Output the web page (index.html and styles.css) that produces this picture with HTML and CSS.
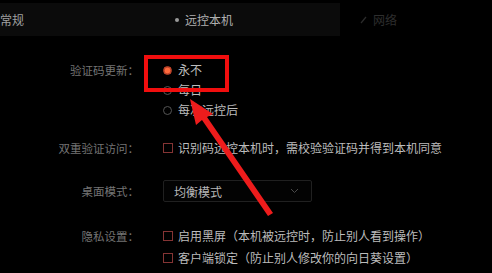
FILE: index.html
```html
<!DOCTYPE html>
<html lang="zh">
<head>
<meta charset="utf-8">
<link rel="stylesheet" href="styles.css">
</head>
<body>
<div class="page">
  <div class="tabs">
    <div class="tabs-main">
      <div class="tab tab-general">常规</div>
      <div class="tab tab-remote">
        <svg class="tab-icon" width="6" height="6" viewBox="0 0 6 6"><circle cx="3" cy="3" r="2" fill="#9a9a9a"/></svg>
        <span>远控本机</span>
      </div>
    </div>
    <div class="tab tab-net">
      <svg class="tab-icon" width="8" height="8" viewBox="0 0 8 8"><path d="M1 7 L6 1" stroke="#2c2c2c" stroke-width="1.2"/></svg>
      <span>网络</span>
    </div>
  </div>

  <div class="form">
    <div class="row row-verify">
      <div class="label">验证码更新：</div>
      <div class="field radios">
        <div class="radio-item"><span class="radio checked"></span><span class="opt">永不</span></div>
        <div class="radio-item"><span class="radio"></span><span class="opt">每日</span></div>
        <div class="radio-item"><span class="radio"></span><span class="opt">每次远控后</span></div>
      </div>
    </div>
    <div class="row row-double">
      <div class="label">双重验证访问：</div>
      <div class="field">
        <div class="check-item"><span class="check"></span><span class="opt">识别码远控本机时，需校验验证码并得到本机同意</span></div>
      </div>
    </div>
    <div class="row row-desktop">
      <div class="label">桌面模式：</div>
      <div class="field">
        <div class="select">
          <span class="select-text">均衡模式</span>
          <svg class="chev" width="9" height="6" viewBox="0 0 9 6"><path d="M1 1 L4.5 4.5 L8 1" fill="none" stroke="#4a4a4a" stroke-width="1"/></svg>
        </div>
      </div>
    </div>
    <div class="row row-privacy">
      <div class="label">隐私设置：</div>
      <div class="field checks">
        <div class="check-item"><span class="check"></span><span class="opt">启用黑屏（本机被远控时，防止别人看到操作）</span></div>
        <div class="check-item"><span class="check"></span><span class="opt">客户端锁定（防止别人修改你的向日葵设置）</span></div>
      </div>
    </div>
  </div>

  <div class="highlight"></div>
  <svg class="arrow" width="492" height="273" viewBox="0 0 492 273">
    <polygon points="190,96 213,111 207,114 273,210 268,213 202,117 196,122" fill="#ee1c1c"/>
  </svg>
</div>
</body>
</html>
```

FILE: styles.css
```css
html, body {
  margin: 0;
  padding: 0;
  background: #000;
}
body {
  width: 492px;
  height: 273px;
  overflow: hidden;
  font-family: "Noto Sans CJK SC", "Noto Sans", sans-serif;
  font-size: 12px;
  color: #b8b8b8;
}
.page {
  position: relative;
  width: 492px;
  height: 273px;
}
.tabs {
  display: flex;
  margin-top: 3px;
  height: 33px;
}
.tabs-main {
  display: flex;
  width: 340px;
  background: #0b0b0b;
  align-items: center;
}
.tab {
  display: flex;
  align-items: center;
  line-height: 16px;
}
.tab-general {
  width: 174px;
  color: #a0a0a0;
}
.tab-remote {
  color: #b0b0b0;
  gap: 5px;
}
.tab-net {
  padding-left: 20px;
  gap: 5px;
  color: #2e2e2e;
}
.tab-icon {
  display: block;
}
.form {
  margin-top: 24px;
  display: flex;
  flex-direction: column;
}
.row {
  display: grid;
  grid-template-columns: 139px 1fr;
  column-gap: 21px;
  align-items: start;
}
.label {
  text-align: right;
  color: #747474;
  font-size: 11.5px;
  line-height: 20px;
}
.radios, .checks {
  display: flex;
  flex-direction: column;
}
.radio-item, .check-item {
  display: flex;
  align-items: center;
  height: 20px;
}
.radio {
  width: 9px;
  height: 9px;
  box-sizing: border-box;
  border-radius: 50%;
  border: 1px solid #555;
  margin-left: 3px;
  margin-right: 6px;
}
.radio.checked {
  border: 1px solid #c6452a;
  background: radial-gradient(circle, #ff6a3c 0 2.6px, #b8432a 3.2px);
}
.opt {
  color: #bcbcbc;
  line-height: 20px;
}
.check {
  width: 10px;
  height: 10px;
  box-sizing: border-box;
  border: 1px solid #853434;
  margin-left: 3px;
  margin-right: 5px;
}
.row-double {
  margin-top: 18px;
}
.row-desktop {
  margin-top: 22px;
}
.row-desktop .label {
  line-height: 22px;
}
.select {
  width: 149px;
  height: 22px;
  margin-left: 3px;
  box-sizing: border-box;
  border: 1px solid #202020;
  border-radius: 2px;
  display: flex;
  align-items: center;
  justify-content: space-between;
  padding: 0 12px 0 10px;
  background: #030303;
}
.select-text {
  color: #b8b8b8;
}
.row-privacy {
  margin-top: 23px;
}
.row-privacy .check-item {
  height: 22px;
}
.row-privacy .label {
  line-height: 22px;
}
.highlight {
  position: absolute;
  left: 144px;
  top: 52px;
  width: 85px;
  height: 37px;
  box-sizing: border-box;
  border: 4px solid #f10e0e;
}
.arrow {
  position: absolute;
  left: 0;
  top: 0;
  pointer-events: none;
}
```
